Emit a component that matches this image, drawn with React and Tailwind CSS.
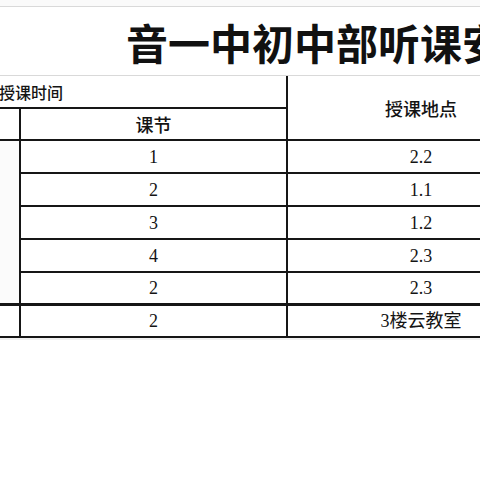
import React from 'react';

const rows = [
  { period: '1', room: '2.2' },
  { period: '2', room: '1.1' },
  { period: '3', room: '1.2' },
  { period: '4', room: '2.3' },
  { period: '2', room: '2.3' },
];

const cjk = { fontFamily: '"Noto Sans CJK SC", "Noto Sans", sans-serif' };
const serif = { fontFamily: '"Liberation Serif", "Noto Sans CJK SC", serif' };

export default function App() {
  return (
    <div className="w-[480px] h-[480px] overflow-hidden bg-white text-[#141414]" style={cjk}>
      {/* Title strip */}
      <div className="h-[6px] bg-[#fafafa]" />
      <div className="h-[70px] border-y border-[#d9d9d9] flex items-center pl-[126px]">
        <h1 className="text-[42px] leading-none font-bold whitespace-nowrap text-[#111] pt-[2px]">
          音一中初中部听课安排表
        </h1>
      </div>

      {/* Schedule table */}
      <div className="w-[554px] grid grid-cols-[21px_267px_266px] grid-rows-[33px_32px_33px_33px_33px_33px_33px_32px]">
        <div className="col-span-2 border-b-2 border-r-2 border-[#161616] flex items-center">
          <span className="-ml-px text-[16px] leading-none font-medium">授课时间</span>
        </div>
        <div className="row-span-2 border-b-2 border-[#161616] flex items-center justify-center">
          <span className="text-[18px] leading-none font-medium">授课地点</span>
        </div>

        <div className="border-b-2 border-r-2 border-[#161616]" />
        <div className="border-b-2 border-r-2 border-[#161616] flex items-center justify-center">
          <span className="text-[18px] leading-none font-medium">课节</span>
        </div>

        <div className="row-span-5 border-b-[3px] border-r-2 border-[#161616] bg-[#fbfbfb]" />
        {rows.map((row, i) => {
          const last = i === rows.length - 1;
          const edge = last ? 'border-b-[3px]' : 'border-b-2';
          return (
            <React.Fragment key={i}>
              <div className={`${edge} border-r-2 border-[#161616] flex items-center justify-center text-[18px] leading-none`} style={serif}>
                {row.period}
              </div>
              <div className={`${edge} border-[#161616] flex items-center justify-center text-[18px] leading-none`} style={serif}>
                {row.room}
              </div>
            </React.Fragment>
          );
        })}

        <div className="border-b-2 border-r-2 border-[#161616]" />
        <div className="border-b-2 border-r-2 border-[#161616] flex items-center justify-center text-[18px] leading-none" style={serif}>
          2
        </div>
        <div className="border-b-2 border-[#161616] flex items-center justify-center text-[18px] leading-none" style={serif}>
          3楼云教室
        </div>
      </div>
      <div className="h-[2px] bg-[#f0f0f0]" />
    </div>
  );
}
